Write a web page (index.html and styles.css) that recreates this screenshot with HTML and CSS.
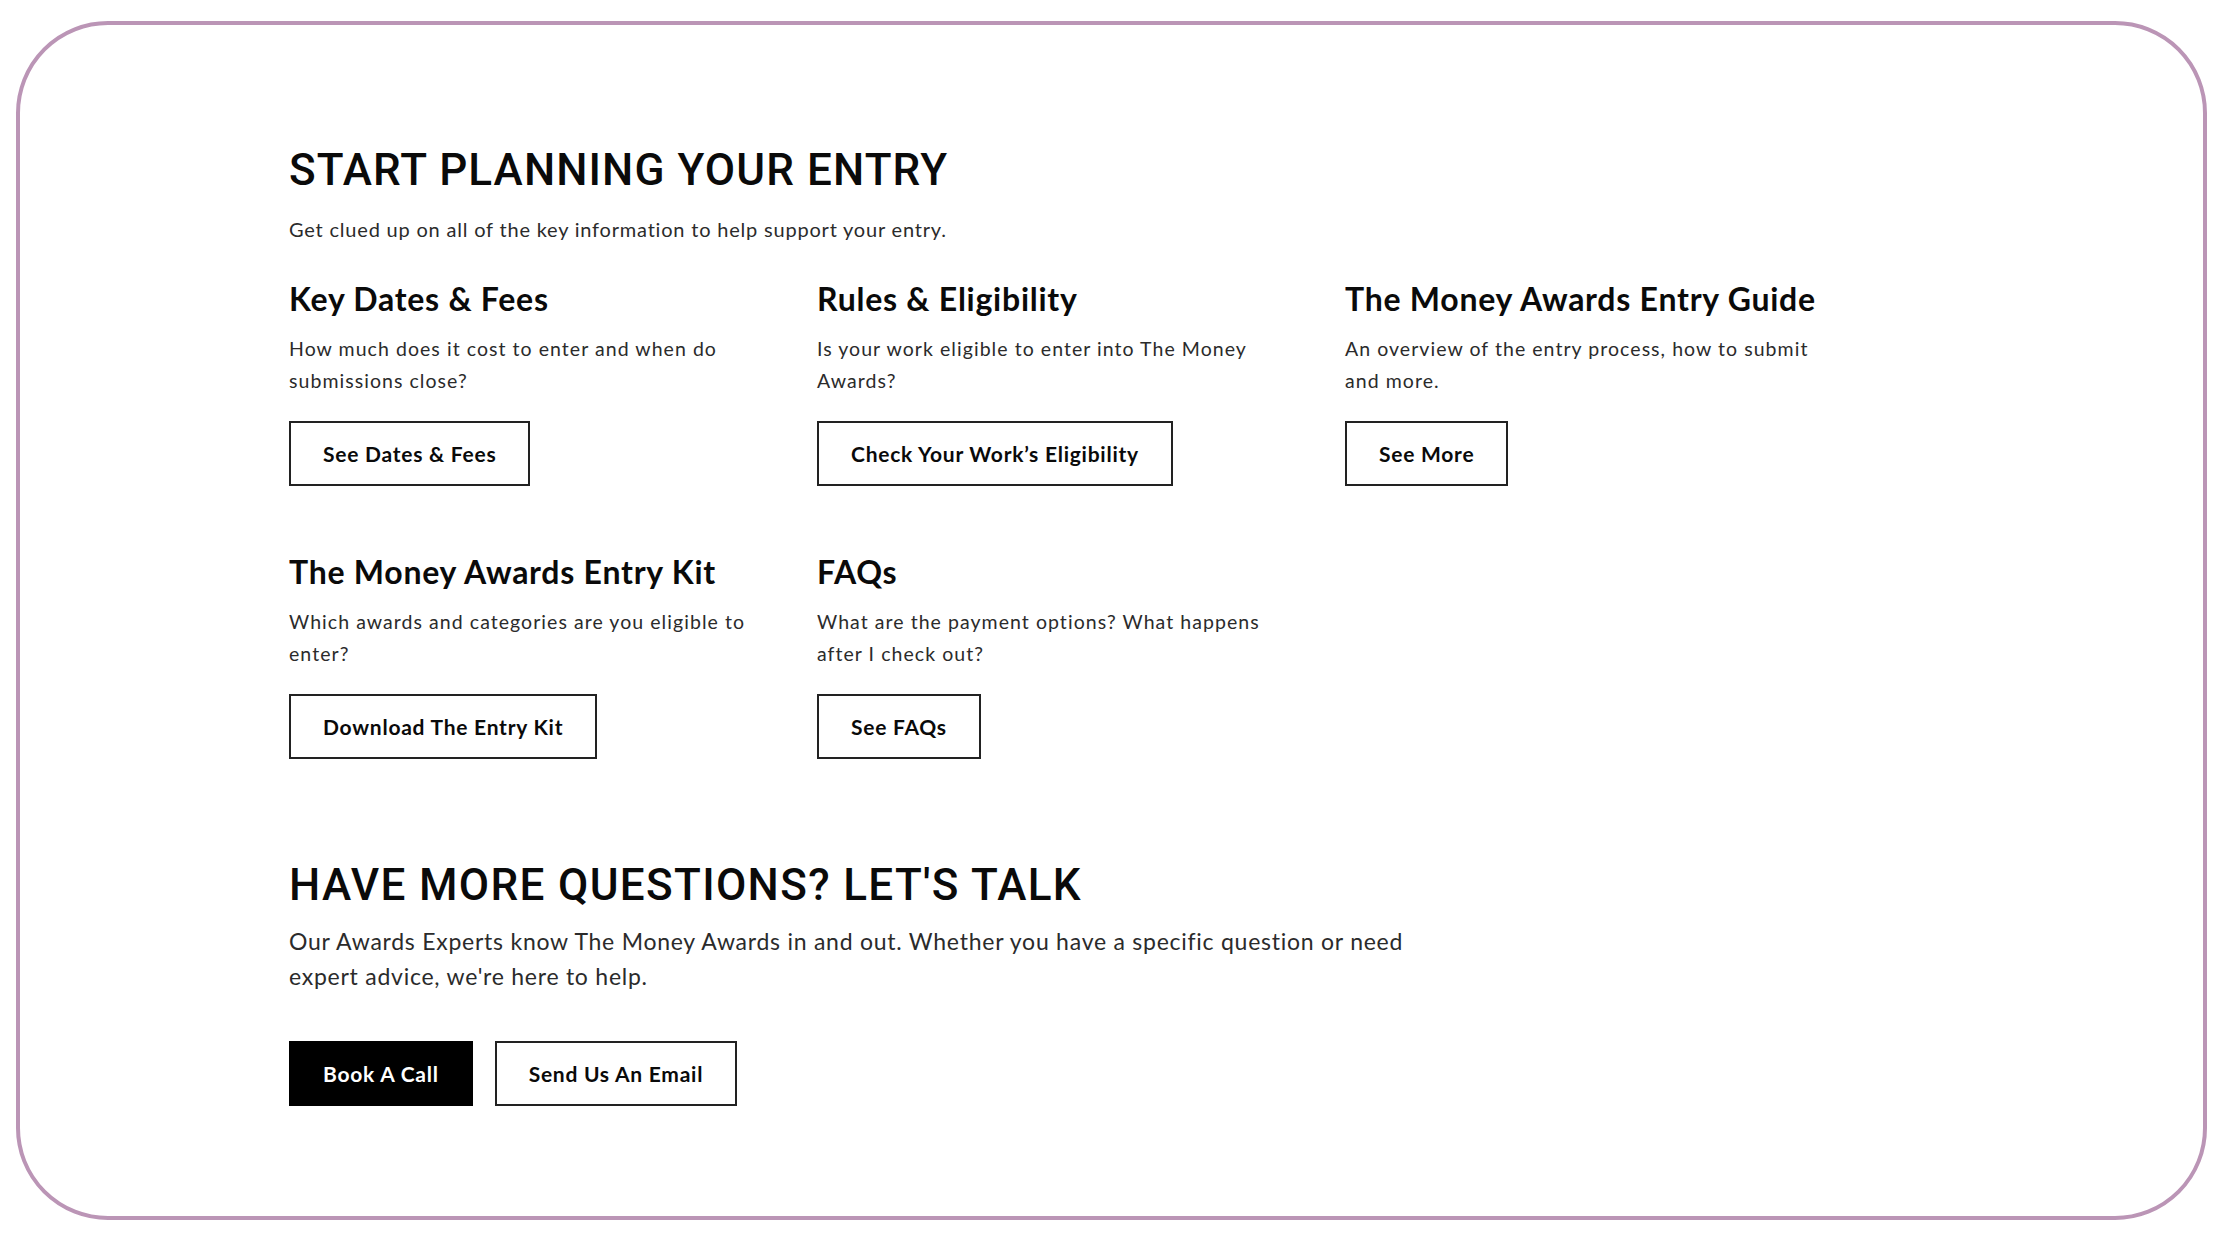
FILE: index.html
```html
<!DOCTYPE html>
<html lang="en">
<head>
  <meta charset="UTF-8" />
  <title>The Money Awards - Start Planning Your Entry</title>
  <link rel="stylesheet" href="styles.css">
</head>
<body>

  <div class="frame">

    <!-- Planning Section -->
    <section class="planning">
      <h1 class="section-title">START PLANNING YOUR ENTRY</h1>
      <p class="section-lead">Get clued up on all of the key information to help support your entry.</p>

      <div class="cards">
        <div class="card">
          <h3>Key Dates &amp; Fees</h3>
          <p>How much does it cost to enter and when do submissions close?</p>
          <a class="btn" href="#">See Dates &amp; Fees</a>
        </div>

        <div class="card">
          <h3>Rules &amp; Eligibility</h3>
          <p>Is your work eligible to enter into The Money Awards?</p>
          <a class="btn" href="#">Check Your Work&rsquo;s Eligibility</a>
        </div>

        <div class="card">
          <h3>The Money Awards Entry Guide</h3>
          <p>An overview of the entry process, how to submit and more.</p>
          <a class="btn" href="#">See More</a>
        </div>

        <div class="card">
          <h3>The Money Awards Entry Kit</h3>
          <p>Which awards and categories are you eligible to enter?</p>
          <a class="btn" href="#">Download The Entry Kit</a>
        </div>

        <div class="card">
          <h3>FAQs</h3>
          <p>What are the payment options? What happens after I check out?</p>
          <a class="btn" href="#">See FAQs</a>
        </div>
      </div>
    </section>

    <!-- Contact Section -->
    <section class="talk">
      <h2 class="section-title">HAVE MORE QUESTIONS? LET'S TALK</h2>
      <p class="talk-text">Our Awards Experts know The Money Awards in and out. Whether you have a specific question or need expert advice, we're here to help.</p>

      <div class="actions">
        <a class="btn btn-dark" href="#">Book A Call</a>
        <a class="btn" href="#">Send Us An Email</a>
      </div>
    </section>

  </div>

</body>
</html>
```

FILE: styles.css
```css
* {
  box-sizing: border-box;
}

body {
  margin: 0;
  background-color: #fff;
  font-family: Lato, 'Noto Sans', sans-serif;
  color: #2b2b2b;
}

.frame {
  margin: 21px 16px 20px 16px;
  height: 1199px;
  border: 4px solid #bb95b6;
  border-radius: 92px;
  padding: 119px 0 0 269px;
}

h1, h2, h3, p {
  margin: 0;
}

.section-title {
  font-family: Roboto, 'Liberation Sans', sans-serif;
  font-weight: 500;
  font-size: 44px;
  line-height: 52px;
  letter-spacing: 1.1px;
  color: #0a0a0a;
}

.section-lead {
  margin-top: 19px;
  font-size: 20px;
  line-height: 28px;
  letter-spacing: 0.8px;
}

/* Cards Grid */
.cards {
  display: grid;
  grid-template-columns: repeat(3, 488px);
  column-gap: 40px;
  row-gap: 67px;
  margin-top: 37px;
}

.card {
  display: flex;
  flex-direction: column;
  align-items: flex-start;
}

.card h3 {
  font-size: 32px;
  line-height: 38px;
  font-weight: 700;
  letter-spacing: 0.75px;
  color: #0a0a0a;
}

.card p {
  margin-top: 15px;
  font-size: 19.5px;
  line-height: 32px;
  letter-spacing: 1.05px;
}

.btn {
  display: inline-flex;
  align-items: center;
  height: 65px;
  padding: 0 32px;
  border: 2px solid #222;
  background-color: #fff;
  color: #0a0a0a;
  font-size: 21px;
  font-weight: 700;
  letter-spacing: 0.75px;
  text-decoration: none;
}

.card .btn {
  margin-top: 24px;
}

.btn-dark {
  background-color: #000;
  border-color: #000;
  color: #fff;
}

/* Talk Section */
.talk {
  margin-top: 100px;
}

.talk h2 {
  letter-spacing: 1.35px;
}

.talk-text {
  margin-top: 13px;
  max-width: 1140px;
  font-size: 23px;
  line-height: 35px;
  letter-spacing: 0.75px;
}

.actions {
  display: flex;
  gap: 22px;
  margin-top: 47px;
}
```
